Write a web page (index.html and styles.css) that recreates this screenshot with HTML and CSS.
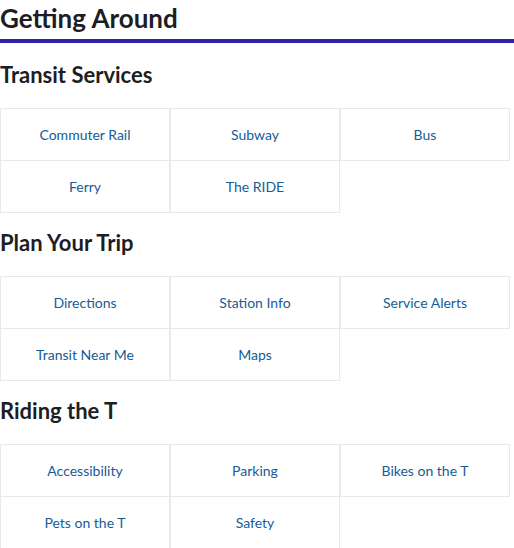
FILE: index.html
```html
<!DOCTYPE html>
<html lang="en">
<head>
<meta charset="utf-8">
<title>Getting Around</title>
<link rel="stylesheet" href="styles.css">
</head>
<body>
<h1 class="page-title">Getting Around</h1>

<section class="group">
  <h2 class="group-title">Transit Services</h2>
  <div class="tiles">
    <a class="tile" href="#">Commuter Rail</a>
    <a class="tile" href="#">Subway</a>
    <a class="tile" href="#">Bus</a>
    <a class="tile" href="#">Ferry</a>
    <a class="tile" href="#">The RIDE</a>
  </div>
</section>

<section class="group">
  <h2 class="group-title">Plan Your Trip</h2>
  <div class="tiles">
    <a class="tile" href="#">Directions</a>
    <a class="tile" href="#">Station Info</a>
    <a class="tile" href="#">Service Alerts</a>
    <a class="tile" href="#">Transit Near Me</a>
    <a class="tile" href="#">Maps</a>
  </div>
</section>

<section class="group">
  <h2 class="group-title">Riding the T</h2>
  <div class="tiles">
    <a class="tile" href="#">Accessibility</a>
    <a class="tile" href="#">Parking</a>
    <a class="tile" href="#">Bikes on the T</a>
    <a class="tile" href="#">Pets on the T</a>
    <a class="tile" href="#">Safety</a>
  </div>
</section>
</body>
</html>
```

FILE: styles.css
```css
html, body {
  margin: 0;
  padding: 0;
  background: #ffffff;
}

body {
  font-family: Lato, "Open Sans", "Liberation Sans", sans-serif;
  color: #1c1e23;
}

.page-title {
  margin: 0 0 19px;
  padding: 2px 0 5px;
  font-size: 26px;
  line-height: 32px;
  font-weight: 700;
  color: #1c1e23;
  border-bottom: 4px solid #2f23a3;
}

.group {
  margin-top: 17px;
}

.group-title {
  margin: 0 0 20px;
  font-size: 22px;
  line-height: 26px;
  font-weight: 700;
  color: #1c1e23;
}

.tiles {
  display: grid;
  grid-template-columns: repeat(3, 170px);
}

.tile {
  box-sizing: border-box;
  display: flex;
  align-items: center;
  justify-content: center;
  height: 52px;
  border: 1px solid #e8e8ee;
  border-top: 0;
  font-size: 14px;
  color: #165c96;
  text-decoration: none;
}

.tile:nth-child(-n+3) {
  height: 53px;
  border-top: 1px solid #e8e8ee;
}
```
